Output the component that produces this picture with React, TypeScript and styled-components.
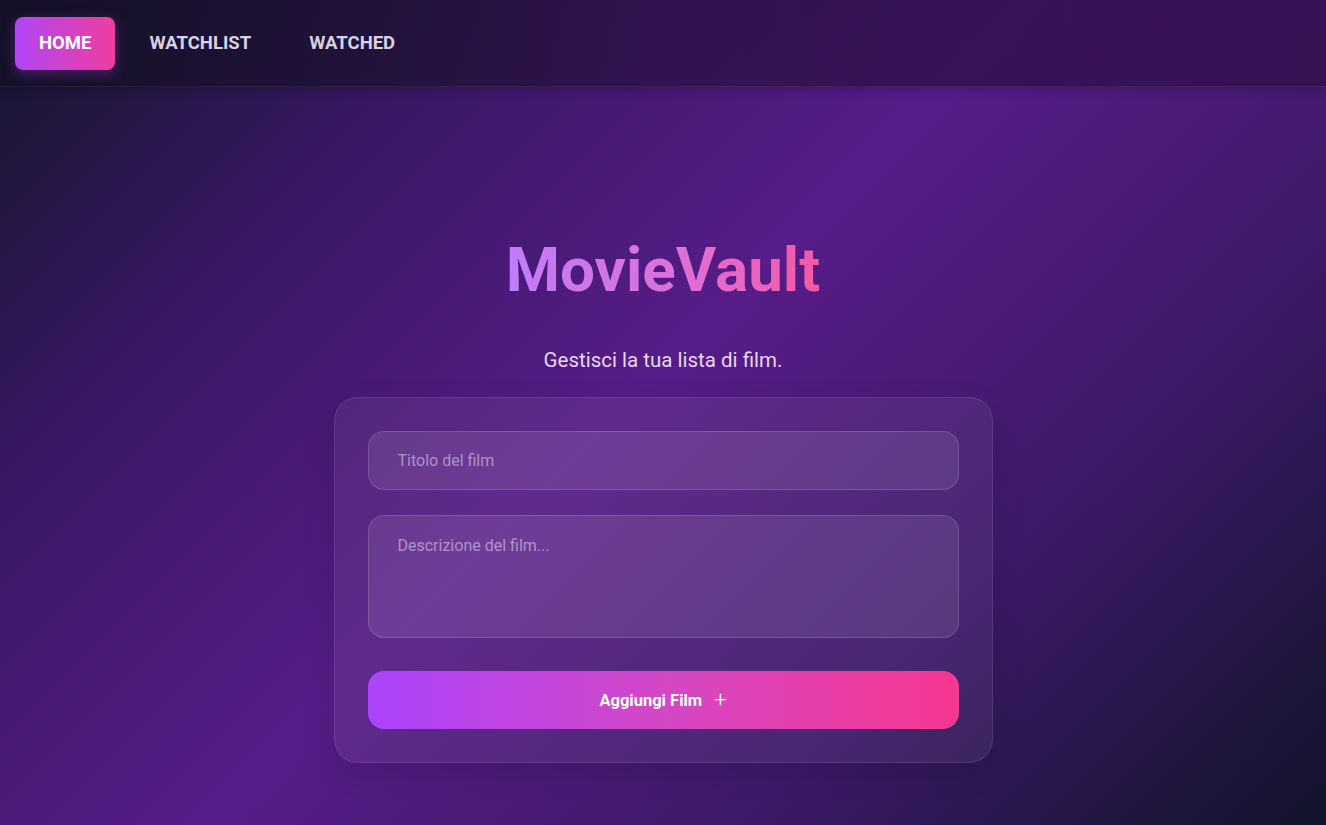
import React from "react";
import styled, { createGlobalStyle } from "styled-components";

const Global = createGlobalStyle`
  html, body { margin: 0; padding: 0; }
  body {
    font-family: Roboto, "Liberation Sans", sans-serif;
    min-height: 825px;
    background: linear-gradient(135deg, #15152b 0%, #3b1868 25%, #571c88 48%, #3e1a6a 72%, #12132a 100%);
    background-attachment: fixed;
    overflow: hidden;
  }
  * { box-sizing: border-box; }
`;

const Page = styled.div`
  min-height: 825px;
  display: flex;
  flex-direction: column;
`;

const Nav = styled.nav`
  height: 87px;
  display: flex;
  align-items: center;
  gap: 10px;
  padding: 0 15px;
  background: linear-gradient(90deg, rgba(20, 16, 38, 0.92) 0%, rgba(40, 16, 64, 0.7) 50%, rgba(48, 14, 72, 0.75) 100%);
  border-bottom: 1px solid rgba(255, 255, 255, 0.06);
  box-shadow: 0 2px 10px rgba(0, 0, 0, 0.2);
`;

const NavItem = styled.a<{ $active?: boolean }>`
  display: flex;
  align-items: center;
  justify-content: center;
  height: 53px;
  padding: 0 24px;
  border-radius: 8px;
  font-size: 18.5px;
  font-weight: 700;
  text-transform: uppercase;
  color: ${(p) => (p.$active ? "#ffffff" : "#d9d2e4")};
  background: ${(p) => (p.$active ? "linear-gradient(90deg, #b146f6 0%, #f03d9d 100%)" : "transparent")};
  box-shadow: ${(p) => (p.$active ? "0 4px 14px rgba(180, 60, 240, 0.35)" : "none")};
  cursor: pointer;
`;

const Main = styled.main`
  flex: 1;
  display: flex;
  flex-direction: column;
  align-items: center;
  padding-top: 147px;
`;

const Title = styled.h1`
  margin: 0;
  font-size: 62px;
  font-weight: 700;
  line-height: 72px;
  background: linear-gradient(90deg, #c07cf9 0%, #dd70d8 55%, #f35aa6 100%);
  -webkit-background-clip: text;
  background-clip: text;
  color: transparent;
`;

const Subtitle = styled.p`
  margin: 42px 0 0;
  font-size: 20.5px;
  line-height: 24px;
  color: #e6d8f0;
`;

const Card = styled.form`
  margin-top: 25px;
  width: 659px;
  padding: 33px;
  border-radius: 24px;
  background: rgba(255, 255, 255, 0.06);
  border: 1px solid rgba(255, 255, 255, 0.09);
  box-shadow: 0 10px 30px rgba(0, 0, 0, 0.12);
  display: flex;
  flex-direction: column;
`;

const fieldBase = `
  width: 100%;
  border-radius: 16px;
  border: 1px solid rgba(255, 255, 255, 0.14);
  background: rgba(255, 255, 255, 0.09);
  color: #fff;
  font-family: Roboto, "Liberation Sans", sans-serif;
  font-size: 16px;
  padding: 0 29px;
  outline: none;
  &::placeholder { color: rgba(225, 205, 240, 0.6); }
`;

const Input = styled.input`
  ${fieldBase}
  height: 59px;
`;

const TextArea = styled.textarea`
  ${fieldBase}
  margin-top: 25px;
  height: 123px;
  padding-top: 20px;
  resize: none;
`;

const Button = styled.button`
  margin-top: 33px;
  height: 58px;
  width: 100%;
  border: none;
  border-radius: 16px;
  background: linear-gradient(90deg, #ac44fd 0%, #d447c6 50%, #f7378f 100%);
  color: #fff;
  font-family: Roboto, "Liberation Sans", sans-serif;
  font-size: 16.5px;
  font-weight: 700;
  display: flex;
  align-items: center;
  justify-content: center;
  gap: 12px;
  cursor: pointer;
`;

const Plus = styled.span`
  font-size: 22px;
  font-weight: 300;
  line-height: 1;
`;

export default function App() {
  return (
    <>
      <Global />
      <Page>
        <Nav>
          <NavItem $active>Home</NavItem>
          <NavItem>Watchlist</NavItem>
          <NavItem>Watched</NavItem>
        </Nav>
        <Main>
          <Title>MovieVault</Title>
          <Subtitle>Gestisci la tua lista di film.</Subtitle>
          <Card onSubmit={(e) => e.preventDefault()}>
            <Input placeholder="Titolo del film" />
            <TextArea placeholder="Descrizione del film..." />
            <Button type="submit">
              Aggiungi Film <Plus>+</Plus>
            </Button>
          </Card>
        </Main>
      </Page>
    </>
  );
}
